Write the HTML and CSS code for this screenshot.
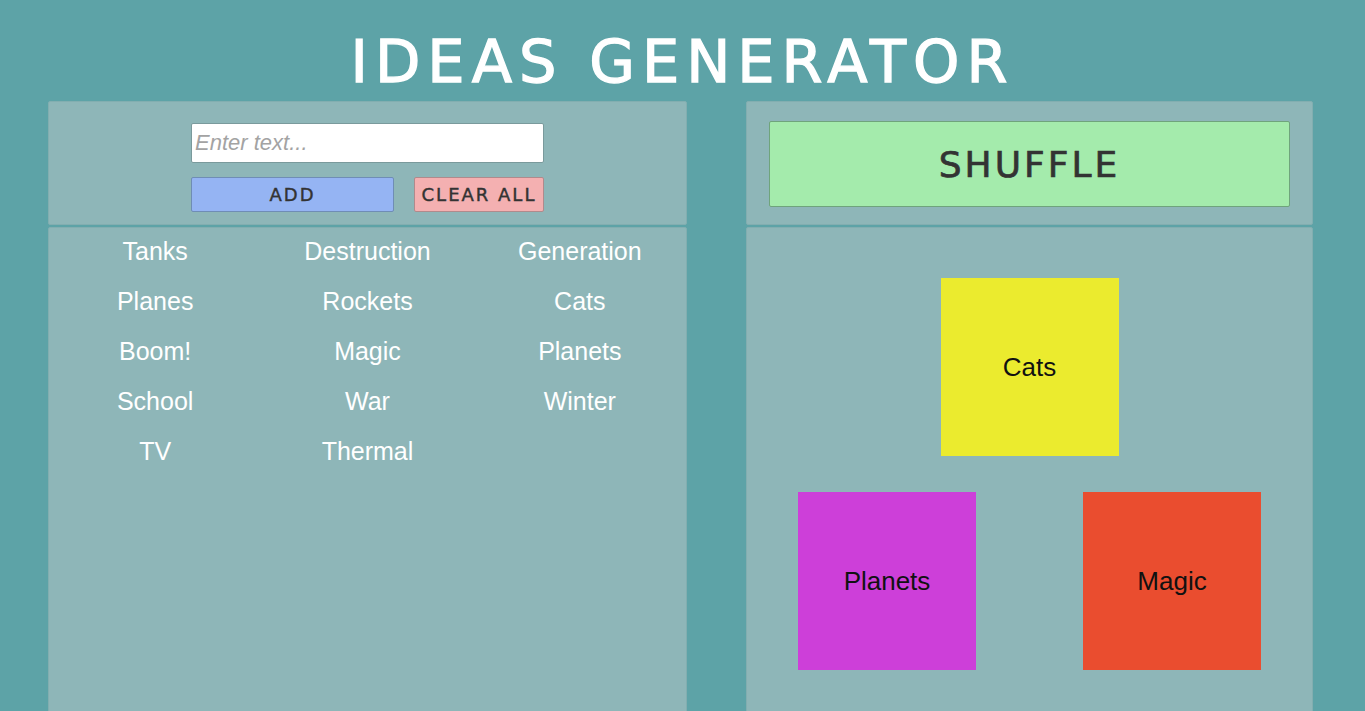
FILE: index.html
```html
<!DOCTYPE html>
<html>
<head>
<meta charset="utf-8">
<title>Ideas Generator</title>
<link rel="stylesheet" href="styles.css">
</head>
<body>
<h1 class="title">IDEAS GENERATOR</h1>
<main class="layout">
  <section class="column column-left">
    <div class="panel panel-top controls">
      <input class="text-input" type="text" placeholder="Enter text...">
      <div class="button-row">
        <button class="btn btn-add">ADD</button>
        <button class="btn btn-clear">CLEAR ALL</button>
      </div>
    </div>
    <div class="panel panel-bottom idea-list">
      <div class="idea">Tanks</div>
      <div class="idea">Destruction</div>
      <div class="idea">Generation</div>
      <div class="idea">Planes</div>
      <div class="idea">Rockets</div>
      <div class="idea">Cats</div>
      <div class="idea">Boom!</div>
      <div class="idea">Magic</div>
      <div class="idea">Planets</div>
      <div class="idea">School</div>
      <div class="idea">War</div>
      <div class="idea">Winter</div>
      <div class="idea">TV</div>
      <div class="idea">Thermal</div>
    </div>
  </section>
  <section class="column column-right">
    <div class="panel panel-top shuffle-wrap">
      <button class="btn btn-shuffle">SHUFFLE</button>
    </div>
    <div class="panel panel-bottom result">
      <div class="result-row result-row-top">
        <div class="card card-yellow">Cats</div>
      </div>
      <div class="result-row result-row-bottom">
        <div class="card card-purple">Planets</div>
        <div class="card card-red">Magic</div>
      </div>
    </div>
  </section>
</main>
</body>
</html>
```
FILE: styles.css
```css
html, body {
  margin: 0;
  padding: 0;
  height: 100%;
  overflow: hidden;
}
body {
  background: #5da3a7;
  font-family: "Liberation Sans", Arial, sans-serif;
}
.title {
  margin: 0;
  height: 101px;
  padding-top: 27px;
  box-sizing: border-box;
  text-align: center;
  color: #ffffff;
  font-family: "DejaVu Sans", sans-serif;
  font-weight: normal;
  font-size: 59px;
  line-height: 70px;
  letter-spacing: 7px;
  -webkit-text-stroke: 1.3px #ffffff;
}
.layout {
  display: flex;
  gap: 59px;
  padding-left: 48px;
}
.column {
  display: flex;
  flex-direction: column;
  gap: 2px;
}
.column-left { width: 639px; }
.column-right { width: 567px; }
.panel {
  background: #8eb6b8;
  border: 1px solid #82aeb0;
  border-radius: 2px;
  box-sizing: border-box;
}
.panel-top { height: 124px; }
.panel-bottom { height: 500px; }
.controls {
  display: flex;
  flex-direction: column;
  align-items: center;
  padding-top: 21px;
}
.text-input {
  width: 353px;
  height: 40px;
  box-sizing: border-box;
  border: 1px solid #7a9a9c;
  border-radius: 2px;
  background: #ffffff;
  font-family: "Liberation Sans", Arial, sans-serif;
  font-size: 22px;
  padding: 0 3px;
  outline: none;
}
.text-input::placeholder {
  color: #a3a3a3;
  font-style: italic;
}
.button-row {
  display: flex;
  gap: 20px;
  margin-top: 14px;
}
.btn {
  box-sizing: border-box;
  border-radius: 2px;
  color: #333333;
  font-family: "DejaVu Sans", sans-serif;
  font-weight: normal;
  letter-spacing: 2px;
  padding: 0;
  cursor: pointer;
  -webkit-text-stroke: 0.4px #333333;
}
.btn-add {
  width: 203px;
  height: 35px;
  background: #95b4f3;
  border: 1px solid #6f8db5;
  font-size: 18px;
}
.btn-clear {
  width: 130px;
  height: 35px;
  background: #f4b0b1;
  border: 1px solid #b08a8c;
  font-size: 18px;
  letter-spacing: 2px;
}
.shuffle-wrap {
  padding: 19px 22px 0 22px;
}
.btn-shuffle {
  width: 100%;
  height: 86px;
  background: #a4ebac;
  border: 1px solid #6fa47c;
  font-size: 36px;
  letter-spacing: 3px;
  -webkit-text-stroke: 0.7px #333333;
}
.idea-list {
  display: grid;
  grid-template-columns: repeat(3, 1fr);
  grid-auto-rows: 50px;
  align-content: start;
}
.idea {
  display: flex;
  align-items: center;
  justify-content: center;
  color: #ffffff;
  font-size: 25px;
  padding-bottom: 3px;
}
.result {
  display: flex;
  flex-direction: column;
  padding: 50px 51px 0 51px;
  gap: 36px;
}
.result-row {
  display: flex;
}
.result-row-top { justify-content: center; }
.result-row-bottom { justify-content: space-between; }
.card {
  width: 178px;
  height: 178px;
  display: flex;
  align-items: center;
  justify-content: center;
  color: #111111;
  font-size: 26px;
}
.card-yellow { background: #ebeb2e; }
.card-purple { background: #cd3fd9; }
.card-red { background: #ea4d2f; }
```
